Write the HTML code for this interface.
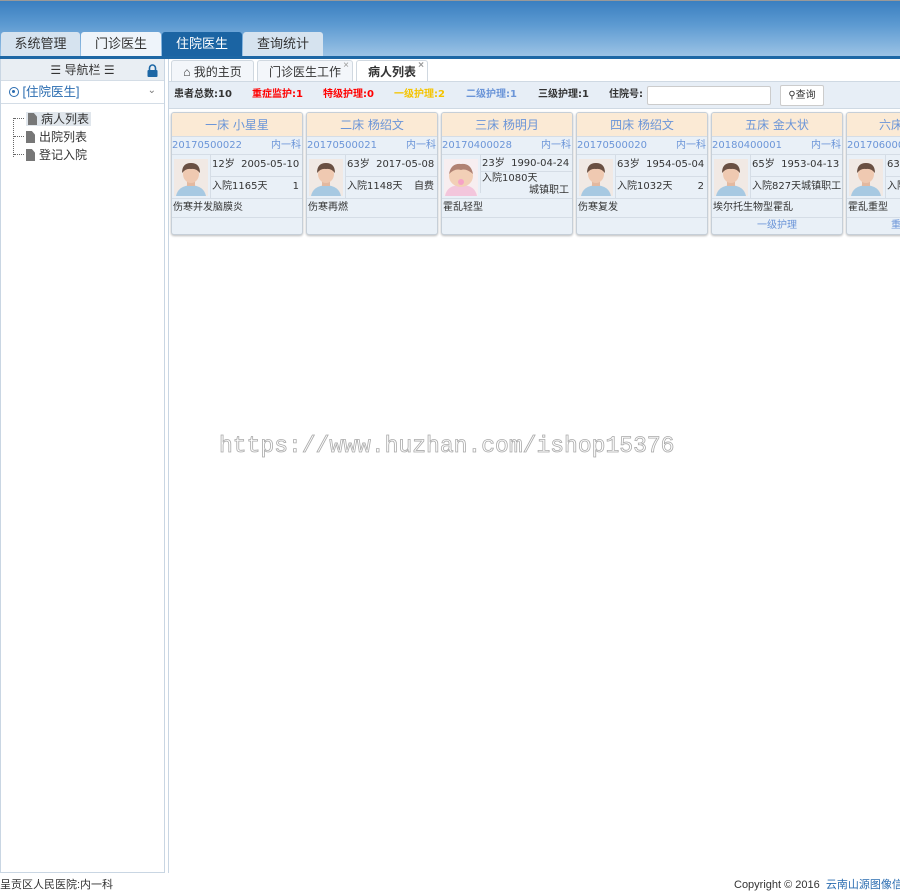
<!DOCTYPE html>
<html><head><meta charset="utf-8"><style>
*{margin:0;padding:0;box-sizing:border-box}
body{width:900px;height:891px;overflow:hidden;background:#fff;font-family:"Liberation Sans","Noto Sans CJK SC",sans-serif;font-size:12px;color:#333;position:relative}
.hdr{position:absolute;left:0;top:0;width:900px;height:56px;border-top:1px solid #999;background:linear-gradient(180deg,#3a7fc0 0%,#5e9bd2 45%,#9cc3e5 100%)}
.bar{position:absolute;left:0;top:56px;width:900px;height:3px;background:#1d67a5}
.tab{position:absolute;top:32px;height:24px;line-height:24px;text-align:center;font-size:13px;color:#333;border-radius:3px 3px 0 0}
.lp{position:absolute;left:0;top:59px;width:165px;height:814px;border:1px solid #c9d6e3;border-top:none}
.lph{height:22px;background:#e9eef3;border-bottom:1px solid #d4dde6;text-align:center;line-height:22px;font-size:12px;position:relative}
.lps{height:23px;border-bottom:1px solid #d4dde6;line-height:23px;padding-left:8px;color:#2a6cb0;font-size:12.5px;position:relative}
.tree{padding-left:12px;padding-top:6px}
.ti{height:18px;line-height:18px;font-size:12px;position:relative;padding-left:13px}
.ti i{position:absolute;left:1px;top:8px;width:10px;border-top:1px dotted #666}
.doc{display:inline-block;width:9px;height:12px;background:#777;vertical-align:-2px;margin-right:4px;clip-path:polygon(0 0,65% 0,100% 30%,100% 100%,0 100%)}
.ct{position:absolute;left:168px;top:59px;width:732px;height:814px;border-left:1px solid #c9d6e3}
.ctab{position:absolute;top:1px;height:22px;line-height:22px;font-size:12px;border:1px solid #d0d8e0;border-bottom:none;background:#f3f6fa;text-align:center;border-radius:3px 3px 0 0}
.x{position:absolute;right:3px;top:-6px;color:#999;font-size:10px}
.tb{position:absolute;left:0;top:22px;width:732px;height:28px;background:#e7eef6;border-top:1px solid #cfd9e3;border-bottom:1px solid #cfd9e3;font-size:10px;font-weight:bold;line-height:26px;font-family:"DejaVu Sans","Noto Sans CJK SC",sans-serif}
.tb span{position:absolute;top:0;white-space:nowrap}
.card{position:absolute;top:112px;width:132px;height:123px;border:1px solid #c6cfd8;border-radius:3px;background:#e9f0f7;overflow:hidden;box-shadow:0 1px 2px #bbb;font-family:"DejaVu Sans","Noto Sans CJK SC",sans-serif}
.ch{height:24px;background:#fbead5;text-align:center;line-height:24px;color:#6b95d8;font-size:12px;border-bottom:1px solid #d5dde6;white-space:nowrap}
.cid{height:18px;line-height:17px;color:#6b95d8;font-size:10px;border-bottom:1px solid #d5dde6;position:relative;white-space:nowrap}
.cid b{font-weight:normal;position:absolute;right:1px}
.cm{height:44px;border-bottom:1px solid #d5dde6;position:relative;font-size:10px}
.ph{position:absolute;left:2px;top:4px;width:34px;height:37px;background:#f1e9e4;overflow:hidden}
.r1,.r2{position:absolute;left:38px;right:0;height:22px;line-height:20px;padding-left:1px;white-space:nowrap;border-left:1px solid #d5dde6}
.r1{top:0;border-bottom:1px solid #d5dde6}.r2{top:22px}
.r1 b,.r2 b{font-weight:normal;position:absolute;right:3px}
.dg{height:19px;line-height:18px;font-size:10px;border-bottom:1px solid #d5dde6;padding-left:1px;white-space:nowrap}
.bt{height:16px;line-height:15px;text-align:center;color:#6b95d8;font-size:10px}
.wm{position:absolute;left:219px;top:430px;font-family:"Liberation Mono",monospace;font-size:23px;line-height:32px;color:transparent;-webkit-text-stroke:0.8px #aaa;white-space:nowrap}
.ft{position:absolute;top:876px;font-size:11px;color:#333;white-space:nowrap}
</style></head><body>
<div class="hdr"></div>
<div class="tab" style="left:1px;width:79px;background:#d6e3ef">系统管理</div>
<div class="tab" style="left:81px;width:80px;background:#eef4fa">门诊医生</div>
<div class="tab" style="left:162px;width:80px;background:#1b64a3;color:#fff">住院医生</div>
<div class="tab" style="left:243px;width:80px;background:#d6e3ef">查询统计</div>
<div class="bar"></div>

<div class="lp">
 <div class="lph">☰ 导航栏 ☰<svg style="position:absolute;right:6px;top:5px" width="11" height="13" viewBox="0 0 11 13"><path d="M2.5 6V4a3 3 0 0 1 6 0v2" fill="none" stroke="#1d67a5" stroke-width="1.6"/><rect x="0.5" y="6" width="10" height="7" rx="1" fill="#1d67a5"/></svg></div>
 <div class="lps"><span style="display:inline-block;width:10px;height:10px;border:1.5px solid #2a6cb0;border-radius:50%;vertical-align:-1px;position:relative"><span style="position:absolute;left:2px;top:2px;width:3px;height:3px;background:#2a6cb0;border-radius:50%"></span></span> [住院医生]<span style="position:absolute;right:8px;top:-2px;color:#777;font-size:10px">⌄</span></div>
 <div class="tree">
  <div class="ti"><i></i><span style="background:#e0e6ec;padding:0 2px"><span class="doc"></span>病人列表</span></div>
  <div class="ti"><i></i><span class="doc"></span>出院列表</div>
  <div class="ti"><i></i><span class="doc"></span>登记入院</div>
 </div>
 <div style="position:absolute;left:12px;top:59px;height:39px;border-left:1px dotted #666"></div>
</div>

<div class="ct">
 <div class="ctab" style="left:2px;width:83px">&#8962; 我的主页</div>
 <div class="ctab" style="left:88px;width:96px">门诊医生工作<span class="x">×</span></div>
 <div class="ctab" style="left:187px;width:72px;background:#fff;font-weight:bold;height:23px">病人列表<span class="x">×</span></div>
 <div class="tb">
  <span style="left:5px;color:#333">患者总数:10</span>
  <span style="left:83px;color:#f00">重症监护:1</span>
  <span style="left:154px;color:#f00">特级护理:0</span>
  <span style="left:225px;color:#f5c400">一级护理:2</span>
  <span style="left:297px;color:#6b95d8">二级护理:1</span>
  <span style="left:369px;color:#333">三级护理:1</span>
  <span style="left:440px;color:#333">住院号:</span>
  <div style="position:absolute;left:478px;top:4px;width:124px;height:19px;background:#fff;border:1px solid #ccc;border-radius:2px"></div>
  <div style="position:absolute;left:611px;top:3px;width:44px;height:21px;background:#fff;border:1px solid #ccc;border-radius:2px;line-height:19px;text-align:center;font-weight:normal">&#9906;查询</div>
 </div>
</div>

<svg width="0" height="0" style="position:absolute"><defs>
<g id="man"><rect width="34" height="37" fill="#f1e9e4"/><path d="M2 37 Q4 27 17 26 Q30 27 32 37Z" fill="#a7c9e2"/><rect x="13" y="20" width="8" height="7" fill="#e3b9a0"/><ellipse cx="17" cy="15" rx="8" ry="9" fill="#efc9b1"/><path d="M8 14 Q8 4 17 4 Q26 4 26 14 Q22 9 17 10 Q12 9 8 14Z" fill="#6a5043"/></g>
<g id="baby"><rect width="34" height="37" fill="#f7eef0"/><path d="M1 37 Q3 26 17 26 Q31 26 33 37Z" fill="#f3c6dc"/><ellipse cx="17" cy="17" rx="12" ry="11" fill="#f2cfb6"/><path d="M5 15 Q7 4 17 5 Q27 4 29 15 Q22 9 17 11 Q11 9 5 15Z" fill="#b08273"/><circle cx="17" cy="23" r="3" fill="#f6a2c6"/></g>
</defs></svg>

<div class="card" style="left:171px"><div class="ch">一床 小星星</div><div class="cid">20170500022<b>内一科</b></div><div class="cm"><svg class="ph"><use href="#man"/></svg><div class="r1">12岁 &nbsp;2005-05-10</div><div class="r2">入院1165天<b>1</b></div></div><div class="dg">伤寒并发脑膜炎</div><div class="bt"></div></div>
<div class="card" style="left:306px"><div class="ch">二床 杨绍文</div><div class="cid">20170500021<b>内一科</b></div><div class="cm"><svg class="ph"><use href="#man"/></svg><div class="r1">63岁 &nbsp;2017-05-08</div><div class="r2">入院1148天<b>自费</b></div></div><div class="dg">伤寒再燃</div><div class="bt"></div></div>
<div class="card" style="left:441px"><div class="ch">三床 杨明月</div><div class="cid">20170400028<b>内一科</b></div><div class="cm"><svg class="ph"><use href="#baby"/></svg><div class="r1" style="border-bottom:none;height:18px;line-height:18px">23岁 &nbsp;1990-04-24</div><div class="r2" style="top:16px;border-top:1px solid #d5dde6;line-height:14px">入院1080天<br><b style="top:12px">城镇职工</b></div></div><div class="dg">霍乱轻型</div><div class="bt"></div></div>
<div class="card" style="left:576px"><div class="ch">四床 杨绍文</div><div class="cid">20170500020<b>内一科</b></div><div class="cm"><svg class="ph"><use href="#man"/></svg><div class="r1">63岁 &nbsp;1954-05-04</div><div class="r2">入院1032天<b>2</b></div></div><div class="dg">伤寒复发</div><div class="bt"></div></div>
<div class="card" style="left:711px"><div class="ch">五床 金大状</div><div class="cid">20180400001<b>内一科</b></div><div class="cm"><svg class="ph"><use href="#man"/></svg><div class="r1">65岁 &nbsp;1953-04-13</div><div class="r2">入院827天城镇职工</div></div><div class="dg">埃尔托生物型霍乱</div><div class="bt">一级护理</div></div>
<div class="card" style="left:846px;width:60px"><div class="ch" style="text-align:left;padding-left:32px">六床</div><div class="cid">2017060001</div><div class="cm"><svg class="ph"><use href="#man"/></svg><div class="r1">63</div><div class="r2">入院</div></div><div class="dg">霍乱重型</div><div class="bt" style="text-align:left;padding-left:44px">重</div></div>

<div class="wm">https://www.huzhan.com/ishop15376</div>
<div class="ft" style="left:0">呈贡区人民医院:内一科</div>
<div class="ft" style="left:734px">Copyright © 2016 &nbsp;<span style="color:#2a6cb0">云南山源图像信</span></div>
</body></html>
